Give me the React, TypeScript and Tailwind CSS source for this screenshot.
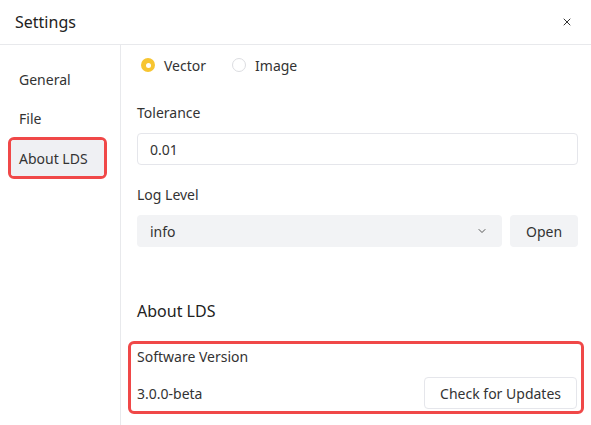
import { ChevronDown, X } from "lucide-react"

const font = { fontFamily: '"Noto Sans", "Liberation Sans", sans-serif' }

export default function App() {
  return (
    <div className="w-[591px] h-[425px] bg-white text-[14px] text-[#333] overflow-hidden" style={font}>
      {/* Header */}
      <div className="h-[45px] flex items-center justify-between pl-[15px] pr-[18px] border-b border-[#e8e9ec]">
        <span className="text-[16px] text-[#222]">Settings</span>
        <X size={12} strokeWidth={2} className="text-[#333]" />
      </div>

      <div className="flex h-[380px]">
        {/* Sidebar */}
        <div className="w-[121px] border-r border-[#e8e9ec] pt-[16px] pl-[11px] flex flex-col gap-[3px]">
          <div className="h-[36px] w-[93px] flex items-center pl-[8px]">General</div>
          <div className="h-[36px] w-[93px] flex items-center pl-[8px]">File</div>
          <div className="-ml-[3px] -mt-[2px] w-[99px] border-[3px] border-[#f04848] rounded-[6px]">
            <div className="h-[36px] flex items-center pl-[8px] bg-[#eff0f3] rounded-[3px]">About LDS</div>
          </div>
        </div>

        {/* Content */}
        <div className="flex-1 pl-[16px] pr-[13px] flex flex-col">
          <div className="mt-[10px] h-[20px] flex items-center gap-[26px] pl-[4px]">
            <label className="flex items-center gap-[9px]">
              <span className="w-[14px] h-[14px] rounded-full bg-[#f7c531] flex items-center justify-center">
                <span className="w-[5px] h-[5px] rounded-full bg-white" />
              </span>
              Vector
            </label>
            <label className="flex items-center gap-[9px]">
              <span className="w-[14px] h-[14px] rounded-full border border-[#dcdde1] bg-white" />
              Image
            </label>
          </div>

          <div className="mt-[28px] h-[20px] leading-[20px]">Tolerance</div>
          <div className="mt-[10px] h-[32px] border border-[#e5e6eb] rounded-[4px] flex items-center pl-[12px]">0.01</div>

          <div className="mt-[20px] h-[20px] leading-[20px]">Log Level</div>
          <div className="mt-[10px] flex gap-[8px]">
            <div className="flex-1 h-[32px] bg-[#f2f3f5] rounded-[4px] flex items-center justify-between pl-[13px] pr-[14px]">
              <span>info</span>
              <ChevronDown size={12} strokeWidth={1.8} className="text-[#444]" />
            </div>
            <button className="w-[68px] h-[32px] bg-[#f2f3f5] rounded-[4px]">Open</button>
          </div>

          <div className="mt-[52px] text-[16px] leading-[24px] text-[#222]">About LDS</div>

          <div className="mt-[18px] -ml-[9px] -mr-[6px] border-[3px] border-[#f04848] rounded-[6px] pl-[6px] pr-[4px] pt-[3px] pb-[2px]">
            <div className="h-[20px] leading-[20px]">Software Version</div>
            <div className="mt-[10px] flex items-center justify-between">
              <span>3.0.0-beta</span>
              <button className="h-[32px] px-[15px] border border-[#e5e6eb] rounded-[4px] bg-white">Check for Updates</button>
            </div>
          </div>
        </div>
      </div>
    </div>
  )
}
